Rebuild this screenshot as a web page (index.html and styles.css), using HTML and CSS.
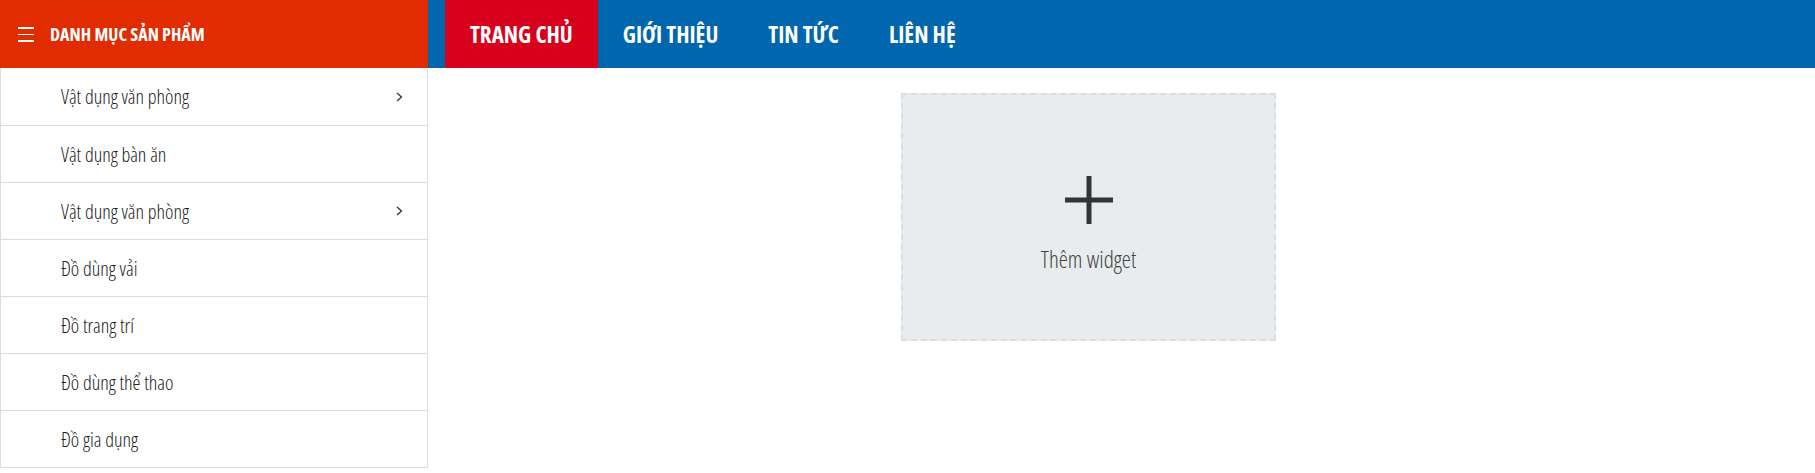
FILE: index.html
```html
<!DOCTYPE html>
<html lang="vi">
<head>
<meta charset="utf-8">
<title>Trang chủ</title>
<link rel="stylesheet" href="styles.css">
</head>
<body>
<header class="topbar">
  <div class="cat-head">
    <span class="burger"><i></i><i></i><i></i></span>
    <span class="cat-title">DANH MỤC SẢN PHẨM</span>
  </div>
  <nav class="mainnav">
    <a class="nav-item active" href="#">TRANG CHỦ</a>
    <a class="nav-item" href="#">GIỚI THIỆU</a>
    <a class="nav-item" href="#">TIN TỨC</a>
    <a class="nav-item" href="#">LIÊN HỆ</a>
  </nav>
</header>
<div class="page">
  <aside class="sidebar">
    <ul class="cat-list">
      <li class="cat-item"><a href="#">Vật dụng văn phòng</a><svg class="chev" width="7" height="10" viewBox="0 0 7 10"><path d="M1 1 L5.5 5 L1 9" fill="none" stroke="#333" stroke-width="1.3"/></svg></li>
      <li class="cat-item"><a href="#">Vật dụng bàn ăn</a></li>
      <li class="cat-item"><a href="#">Vật dụng văn phòng</a><svg class="chev" width="7" height="10" viewBox="0 0 7 10"><path d="M1 1 L5.5 5 L1 9" fill="none" stroke="#333" stroke-width="1.3"/></svg></li>
      <li class="cat-item"><a href="#">Đồ dùng vải</a></li>
      <li class="cat-item"><a href="#">Đồ trang trí</a></li>
      <li class="cat-item"><a href="#">Đồ dùng thể thao</a></li>
      <li class="cat-item"><a href="#">Đồ gia dụng</a></li>
    </ul>
  </aside>
  <main class="content">
    <div class="widget-slot">
      <svg class="plus" width="48" height="48" viewBox="0 0 48 48"><path d="M24 0 V48 M0 24 H48" stroke="#333" stroke-width="5"/></svg>
      <span class="widget-label">Thêm widget</span>
    </div>
  </main>
</div>
</body>
</html>
```
FILE: styles.css
```css
* { box-sizing: border-box; }
html, body { margin: 0; padding: 0; }
body {
  font-family: "Open Sans", "Liberation Sans", sans-serif;
  font-stretch: 75%;
  color: #222;
  background: #fff;
  overflow: hidden;
}
a { text-decoration: none; color: inherit; }

.topbar {
  display: flex;
  height: 68px;
  background: #0066ad;
}
.cat-head {
  width: 428px;
  flex: none;
  background: #e12b00;
  display: flex;
  align-items: center;
  padding-left: 18px;
  color: #fff;
}
.burger {
  display: flex;
  flex-direction: column;
  gap: 5px;
  width: 16px;
  margin-right: 16px;
  margin-top: 1px;
}
.burger i {
  display: block;
  height: 1.5px;
  background: #fff;
}
.cat-title {
  font-weight: 700;
  font-size: 18px;
}
.mainnav {
  display: flex;
  margin-left: 17px;
}
.nav-item {
  display: flex;
  align-items: center;
  padding: 0 25px;
  color: #fff;
  font-weight: 700;
  font-size: 23px;
}
.nav-item.active { background: #d7001d; }

.page { display: flex; }
.sidebar {
  width: 428px;
  flex: none;
  border-left: 1px solid #dcdcdc;
  border-right: 1px solid #dcdcdc;
}
.cat-list { list-style: none; margin: 0; padding: 0; }
.cat-item {
  height: 57px;
  display: flex;
  align-items: center;
  justify-content: space-between;
  padding: 0 24px 0 60px;
  border-bottom: 1px solid #dcdcdc;
  font-size: 20px;
  font-weight: 300;
  color: #222;
}
.cat-item:first-child { height: 58px; }
.chev { flex: none; }

.content {
  flex: 1;
  padding: 25px 0 0 473px;
}
.widget-slot {
  width: 375px;
  height: 248px;
  background: #e8ecee;
  border: 2px dashed #dcdddf;
  display: flex;
  flex-direction: column;
  align-items: center;
  padding-top: 81px;
}
.plus { display: block; }
.widget-label {
  margin-top: 19px;
  font-size: 23px;
  font-weight: 300;
  color: #444;
}
```
